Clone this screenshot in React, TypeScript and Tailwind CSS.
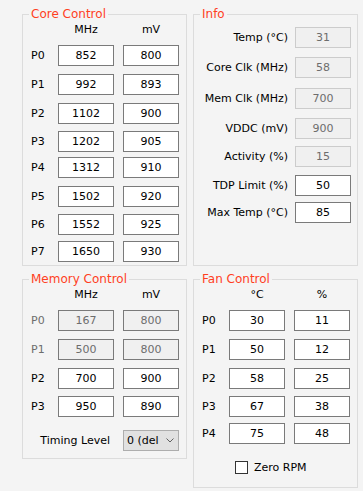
import type { ReactNode } from 'react';

const font = "font-['DejaVu_Sans',sans-serif]";

type Cell = { v: string; off?: boolean };

function Box({ v, off }: Cell) {
  return (
    <input
      readOnly
      value={v}
      className={`h-[21px] w-[56px] px-0 py-0 text-center text-[11px] leading-[19px] outline-none border ${
        off ? 'bg-[#f0f0f0] border-[#cccccc] text-[#6d6d6d]' : 'bg-white border-[#7a7a7a] text-black'
      }`}
    />
  );
}

function Group({ title, className, children }: { title: string; className?: string; children: ReactNode }) {
  return (
    <fieldset className={`m-0 min-w-0 border border-[#dcdcdc] p-0 ${className || ''}`}>
      <legend className="ml-[6px] px-[2px] text-[12px] leading-[14px] text-[#ff3f1f]">{title}</legend>
      {children}
    </fieldset>
  );
}

function Header({ a, b }: { a: string; b: string }) {
  return (
    <div className="mt-[3px] flex h-[12px] items-center leading-[12px]">
      <span className="w-[27px]" />
      <span className="w-[56px] text-center">{a}</span>
      <span className="ml-[9px] w-[56px] text-center">{b}</span>
    </div>
  );
}

function PRow({ label, a, b, mt, off }: { label: string; a: string; b: string; mt: string; off?: boolean }) {
  const cellOff = off ? 'bg-[#f0f0f0] border-[#7a7a7a] text-[#6d6d6d]' : 'bg-white border-[#7a7a7a] text-black';
  return (
    <div className={`flex items-center ${mt}`}>
      <span className={`w-[27px] ${off ? 'text-[#6d6d6d]' : ''}`}>{label}</span>
      <input readOnly value={a} className={`h-[21px] w-[56px] border px-0 py-0 text-center text-[11px] outline-none ${cellOff}`} />
      <input readOnly value={b} className={`ml-[9px] h-[21px] w-[56px] border px-0 py-0 text-center text-[11px] outline-none ${cellOff}`} />
    </div>
  );
}

const core = [
  { label: 'P0', a: '852', b: '800', mt: 'mt-[9px]' },
  { label: 'P1', a: '992', b: '893', mt: 'mt-[8px]' },
  { label: 'P2', a: '1102', b: '900', mt: 'mt-[8px]' },
  { label: 'P3', a: '1202', b: '905', mt: 'mt-[7px]' },
  { label: 'P4', a: '1312', b: '910', mt: 'mt-[5px]' },
  { label: 'P5', a: '1502', b: '920', mt: 'mt-[8px]' },
  { label: 'P6', a: '1552', b: '925', mt: 'mt-[7px]' },
  { label: 'P7', a: '1650', b: '930', mt: 'mt-[6px]' },
];

const info = [
  { label: 'Temp (°C)', v: '31', off: true, mt: 'mt-[6px]' },
  { label: 'Core Clk (MHz)', v: '58', off: true, mt: 'mt-[9px]' },
  { label: 'Mem Clk (MHz)', v: '700', off: true, mt: 'mt-[10px]' },
  { label: 'VDDC (mV)', v: '900', off: true, mt: 'mt-[9px]' },
  { label: 'Activity (%)', v: '15', off: true, mt: 'mt-[7px]' },
  { label: 'TDP Limit (%)', v: '50', off: false, mt: 'mt-[8px]' },
  { label: 'Max Temp (°C)', v: '85', off: false, mt: 'mt-[6px]' },
];

const mem = [
  { label: 'P0', a: '167', b: '800', mt: 'mt-[9px]', off: true },
  { label: 'P1', a: '500', b: '800', mt: 'mt-[8px]', off: true },
  { label: 'P2', a: '700', b: '900', mt: 'mt-[8px]' },
  { label: 'P3', a: '950', b: '890', mt: 'mt-[7px]' },
];

const fan = [
  { label: 'P0', a: '30', b: '11', mt: 'mt-[9px]' },
  { label: 'P1', a: '50', b: '12', mt: 'mt-[8px]' },
  { label: 'P2', a: '58', b: '25', mt: 'mt-[8px]' },
  { label: 'P3', a: '67', b: '38', mt: 'mt-[7px]' },
  { label: 'P4', a: '75', b: '48', mt: 'mt-[6px]' },
];

export default function App() {
  return (
    <div className={`h-[491px] w-[363px] overflow-hidden bg-[#f4f4f4] pl-[22px] pt-[7px] text-[11px] leading-[13px] text-black ${font}`}>
      <div className="grid grid-cols-[165px_165px] gap-x-[6px] gap-y-[6px]">

        {/* Core Control */}
        <Group title="Core Control">
          <div className="pb-[3px] pl-[8px]">
            <Header a="MHz" b="mV" />
            {core.map((r) => (
              <PRow key={r.label} {...r} />
            ))}
          </div>
        </Group>

        {/* Info */}
        <Group title="Info">
          <div className="pr-[6px]">
            {info.map((r) => (
              <div key={r.label} className={`flex items-center justify-end ${r.mt}`}>
                <span className="mr-[7px]">{r.label}</span>
                <Box v={r.v} off={r.off} />
              </div>
            ))}
          </div>
        </Group>

        {/* Memory Control */}
        <Group title="Memory Control" className="self-start">
          <div className="pb-[7px] pl-[8px]">
            <Header a="MHz" b="mV" />
            {mem.map((r) => (
              <PRow key={r.label} {...r} />
            ))}
            <div className="mt-[13px] flex items-center">
              <span className="mr-[13px] w-[79px] text-right">Timing Level</span>
              <div className="flex h-[21px] w-[56px] items-center border border-[#adadad] bg-[#e1e1e1] pl-[3px] pr-[4px]">
                <span className="flex-1 whitespace-nowrap text-[11px]">0 (del</span>
                <svg width="8" height="5" viewBox="0 0 8 5" className="ml-[2px] shrink-0">
                  <path d="M0.5 0.5 L4 4 L7.5 0.5" fill="none" stroke="#606060" strokeWidth="1" />
                </svg>
              </div>
            </div>
          </div>
        </Group>

        {/* Fan Control */}
        <Group title="Fan Control">
          <div className="pb-[13px] pl-[8px]">
            <Header a="°C" b="%" />
            {fan.map((r) => (
              <PRow key={r.label} {...r} />
            ))}
            <div className="mt-[17px] flex items-center pl-[33px]">
              <span className="h-[13px] w-[13px] border border-[#333333] bg-white" />
              <span className="ml-[6px]">Zero RPM</span>
            </div>
          </div>
        </Group>
      </div>
    </div>
  );
}
